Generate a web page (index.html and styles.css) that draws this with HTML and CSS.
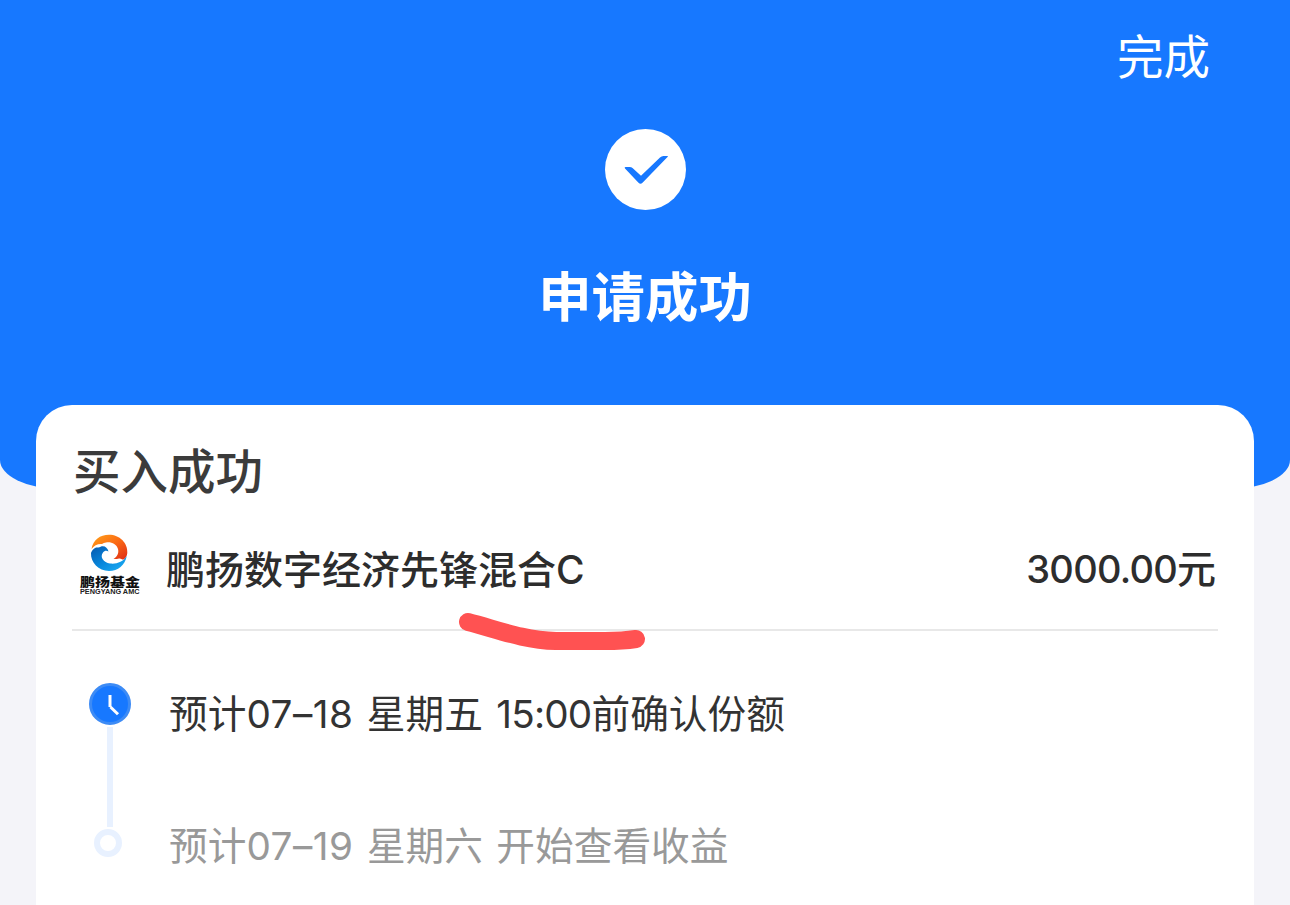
FILE: index.html
```html
<!DOCTYPE html>
<html lang="zh-CN">
<head>
<meta charset="UTF-8">
<title>申请成功</title>
<link rel="stylesheet" href="styles.css">
</head>
<body>
    <div class="header">
        <div class="nav"><a class="done">完成</a></div>
        <svg class="check" viewBox="0 0 81 81">
            <circle cx="40.5" cy="40.5" r="40.5" fill="#fff"/>
            <path d="M20.500 38 H24.500 Q26.500 38 27.500 39 L36 46.800 L55 28.500 Q56.500 27 58.500 27 H62.500 Q63.500 27 62.500 28 L37.500 53.800 Q35.500 55.800 33.500 53.800 L20 39.500 Q19 38.300 20.500 38 Z" fill="#1778ff"/>
        </svg>
        <h1>申请成功</h1>
    </div>

    <div class="card">
        <h2>买入成功</h2>
        <div class="fund">
            <svg class="logo" viewBox="0 0 80 80">
                <defs>
                    <linearGradient id="warm" x1="0" y1="0" x2="1" y2="1">
                        <stop offset="0" stop-color="#ffa31a"/>
                        <stop offset="0.5" stop-color="#fb6a14"/>
                        <stop offset="1" stop-color="#dd2b16"/>
                    </linearGradient>
                    <linearGradient id="cool" x1="0" y1="0" x2="1" y2="1">
                        <stop offset="0" stop-color="#0757ad"/>
                        <stop offset="0.5" stop-color="#0787dc"/>
                        <stop offset="1" stop-color="#20b1f6"/>
                    </linearGradient>
                </defs>
                <path d="M21.500 24 C23 15 30 9.800 39 9.800 C49.500 9.800 58 18 57.300 28 C57 31 55.500 33.500 53.500 34.500 C52 35 51 33 49 33.500 C47 34 45.500 34.300 43.500 34 C47.500 31.500 49 28 48 24 C46.500 19 41 16.500 36 17.500 C34.500 17.800 33 18.300 32 19 C28 18.500 24 20.500 21.500 24 Z" fill="url(#warm)"/>
                <path d="M21 28 C22 25 24.500 22.500 27 22.500 C29 22.500 30 22.300 31 21.500 C34.500 20.300 37.500 22.500 38.500 26.500 C36.500 25.300 34.500 25.500 33 27.500 C29.500 32 33.500 37.500 40 38.500 C46.500 39.300 53 37 56.800 31 C55 40 48 46 39 46 C28.500 46 20.500 37.500 21 28 Z" fill="url(#cool)"/>
                <text x="10" y="61.700" textLength="60" lengthAdjust="spacingAndGlyphs" class="logo-cn">鹏扬基金</text>
                <text x="10" y="69" textLength="59.500" lengthAdjust="spacingAndGlyphs" class="logo-en">PENGYANG AMC</text>
            </svg>
            <span class="name">鹏扬数字经济先锋混合C</span>
            <span class="amount"><span class="num">3000.00</span>元</span>
            <!-- hand-drawn marker stroke under the fund name -->
            <svg class="marker" viewBox="0 0 220 60">
                <path d="M28 22 C56 29 82 40 116 41 H165 Q183 41 196 39" fill="none" stroke="#ff5252" stroke-width="18" stroke-linecap="round"/>
            </svg>
        </div>

        <div class="steps">
            <div class="step">
                <div class="rail">
                    <svg class="clock" viewBox="0 0 42 42">
                        <circle cx="21" cy="21" r="19.500" fill="#1778ff" stroke="#3d8bf5" stroke-width="3"/>
                        <path d="M21 12 V24" fill="none" stroke="#fff" stroke-width="3"/>
                        <path d="M21.500 24 L29 31.300" fill="none" stroke="#fff" stroke-width="3"/>
                    </svg>
                    <div class="line"></div>
                </div>
                <p>预计<span class="date">07–18</span> 星期五 <span class="time">15:00</span>前确认份额</p>
            </div>
            <div class="step pending">
                <div class="rail"><div class="dot"></div></div>
                <p>预计<span class="date">07–19</span> 星期六 开始查看收益</p>
            </div>
        </div>
    </div>
</body>
</html>
```
FILE: styles.css
```css
* {
    box-sizing: border-box;
}
body {
    font-family: Inter, "Noto Sans CJK SC", sans-serif;
    background-color: #f4f4f9;
    margin: 0;
    color: #333;
}
h1, h2, p {
    margin: 0;
}
.header {
    height: 489px;
    background: #1778ff;
    border-radius: 0 0 60px 60px / 0 0 29px 29px;
    color: #fff;
    display: flex;
    flex-direction: column;
    align-items: center;
}
.nav {
    width: 100%;
    height: 129px;
    padding: 27px 80px 0 0;
    text-align: right;
}
.done {
    font-size: 46.5px;
    line-height: 60px;
}
.check {
    width: 81px;
    height: 81px;
}
h1 {
    margin-top: 53px;
    font-size: 53.4px;
    line-height: 70px;
    font-weight: 700;
}
.card {
    height: 500px;
    margin: -84px 36px 0;
    padding: 36px 36px 0;
    background: #fff;
    border-radius: 36px 36px 0 0;
    position: relative;
}
h2 {
    padding-left: 1px;
    font-size: 47.5px;
    line-height: 62px;
    height: 60px;
    font-weight: 500;
    color: #3b3b3b;
}
.fund {
    position: relative;
    display: flex;
    align-items: center;
    height: 130px;
    padding-right: 2px;
    border-bottom: 2px solid #e8e8e8;
    font-size: 39px;
    font-weight: 500;
    color: #2d2d2d;
}
.logo {
    width: 80px;
    height: 80px;
    margin-left: -2px;
}
.logo-cn {
    font-size: 12.5px;
    font-weight: 900;
    fill: #111;
}
.logo-en {
    font-family: "Liberation Sans", Arial, sans-serif;
    font-size: 6.5px;
    font-weight: 700;
    fill: #222;
}
.name {
    margin-left: 16px;
    padding-top: 3px;
}
.amount {
    margin-left: auto;
    padding-top: 1px;
}
.num {
    font-size: 38px;
    letter-spacing: -0.75px;
}
.marker {
    position: absolute;
    left: 368px;
    top: 99px;
    width: 220px;
    height: 60px;
}
.steps {
    padding-top: 52px;
}
.step {
    display: flex;
    height: 146px;
}
.step p {
    margin-left: 22px;
    font-size: 38.7px;
    line-height: 62px;
    word-spacing: 2.5px;
    white-space: nowrap;
}
.date {
    letter-spacing: 0.5px;
}
.time {
    letter-spacing: -0.8px;
}
.rail {
    width: 75px;
    display: flex;
    flex-direction: column;
    align-items: center;
}
.clock {
    width: 42px;
    height: 42px;
    flex: none;
}
.line {
    width: 6px;
    height: 100px;
    margin-top: 2px;
    background: #e8f1ff;
}
.dot {
    width: 28px;
    height: 28px;
    margin-right: 3px;
    border: 6px solid #e8f1ff;
    border-radius: 50%;
}
.step.pending {
    height: 60px;
}
.pending p {
    margin-top: -14px;
    color: #999;
}
```
